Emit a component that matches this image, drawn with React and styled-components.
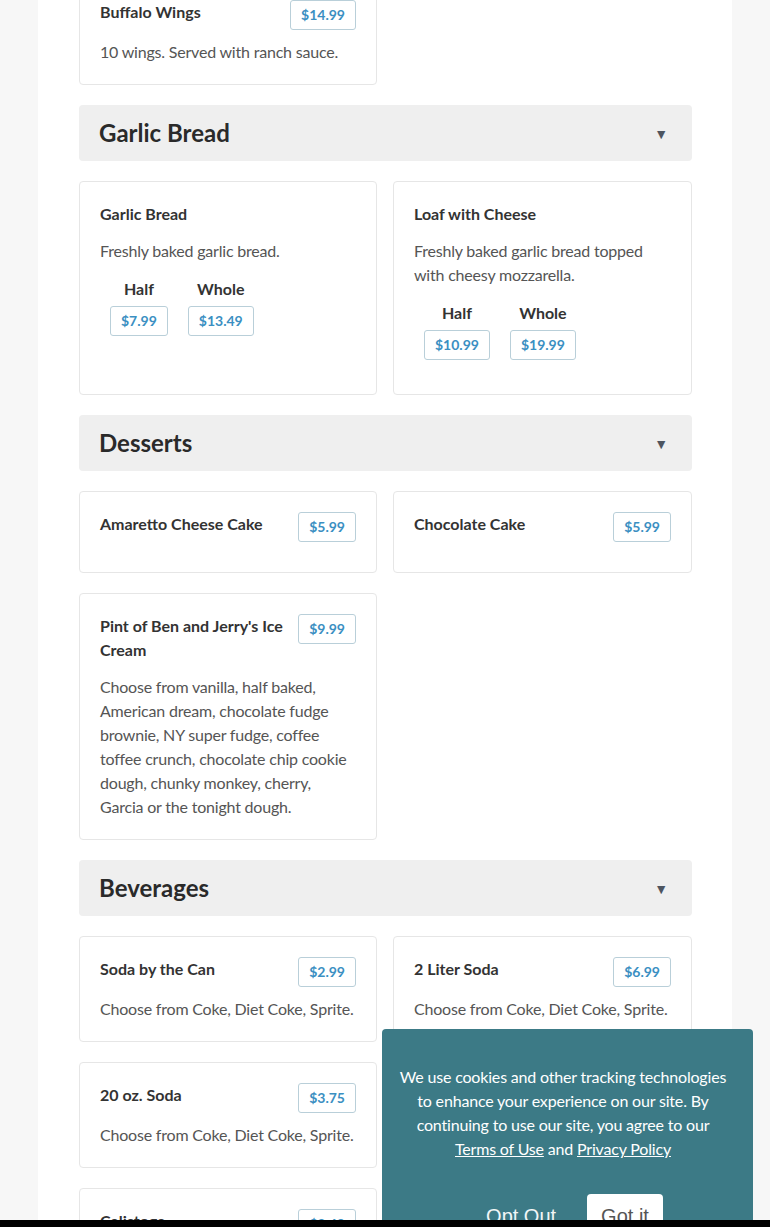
import React from 'react';
import styled, { createGlobalStyle } from 'styled-components';

const GlobalStyle = createGlobalStyle`
  html, body {
    margin: 0;
    padding: 0;
    background: #f7f7f7;
    font-family: Lato, "Open Sans", sans-serif;
    overflow: hidden;
  }
`;

const Page = styled.div`
  margin: 0 38px;
  background: #fff;
  min-height: 1227px;
  padding: 0 40px 0 41px;
  box-sizing: border-box;
`;

const Menu = styled.div`
  margin-top: -21px;
  display: flex;
  flex-direction: column;
  gap: 20px;
`;

const SectionHeader = styled.div`
  height: 56px;
  background: #efefef;
  border-radius: 4px;
  display: flex;
  align-items: center;
  justify-content: space-between;
  padding: 0 24px 0 20px;
`;

const SectionTitle = styled.h2`
  margin: 0 0 1px;
  font-size: 24px;
  font-weight: 700;
  color: #2a2a2a;
`;

const Arrow = styled.span`
  font-size: 14px;
  color: #4d5560;
`;

const Grid = styled.div`
  display: grid;
  grid-template-columns: 298px 299px;
  gap: 20px 16px;
`;

const Card = styled.div`
  border: 1px solid #e6e6e6;
  border-radius: 4px;
  padding: 20px;
  background: #fff;
`;

const TitleRow = styled.div`
  display: flex;
  align-items: flex-start;
  justify-content: space-between;
  gap: 12px;
`;

const ItemTitle = styled.h3`
  margin: 0 0 13px;
  font-size: 16px;
  line-height: 24px;
  font-weight: 700;
  color: #333;
`;

const Price = styled.span`
  flex-shrink: 0;
  display: inline-block;
  border: 1px solid #b9cfd9;
  border-radius: 3px;
  padding: 0 10px;
  height: 28px;
  line-height: 28px;
  font-size: 14px;
  font-weight: 700;
  color: #3b8fc2;
  margin-bottom: ${(p) => (p.$inline ? '0' : '10px')};
`;

const Desc = styled.p`
  margin: 0;
  font-size: 16px;
  line-height: 24px;
  letter-spacing: -0.2px;
  color: #555;
`;

const Options = styled.div`
  display: flex;
  margin-top: 14px;
  margin-bottom: 14px;
`;

const Option = styled.div`
  display: flex;
  flex-direction: column;
  align-items: center;
  margin: 0 10px;
  gap: 5px;
`;

const OptionLabel = styled.span`
  font-size: 16px;
  line-height: 24px;
  font-weight: 700;
  color: #333;
`;

const Banner = styled.div`
  position: fixed;
  top: 1029px;
  right: 17px;
  width: 371px;
  box-sizing: border-box;
  background: #3c7a86;
  border-radius: 4px;
  padding: 36px 18px 36px;
  text-align: center;
  color: #fff;
`;

const BannerText = styled.p`
  margin: 0 4px 0 -5px;
  font-size: 16px;
  line-height: 24px;
  letter-spacing: -0.18px;
`;

const BannerLink = styled.a`
  color: #fff;
  text-decoration: underline;
`;

const BannerActions = styled.div`
  display: flex;
  justify-content: center;
  gap: 17px;
  margin-top: 33px;
`;

const BannerButton = styled.button`
  font-family: "Liberation Sans", Arial, sans-serif;
  font-size: 20px;
  line-height: 24px;
  padding: 10px 14px;
  border: none;
  border-radius: 4px;
  background: ${(p) => (p.$solid ? '#fff' : 'transparent')};
  color: ${(p) => (p.$solid ? '#555' : '#f2f6f7')};
`;

const BottomBar = styled.div`
  position: fixed;
  left: 0;
  right: 0;
  bottom: 0;
  height: 7px;
  background: #000;
`;

const sections = [
  {
    items: [{ title: 'Buffalo Wings', price: '$14.99', desc: '10 wings. Served with ranch sauce.' }],
  },
  {
    name: 'Garlic Bread',
    items: [
      {
        title: 'Garlic Bread',
        desc: 'Freshly baked garlic bread.',
        options: [['Half', '$7.99'], ['Whole', '$13.49']],
      },
      {
        title: 'Loaf with Cheese',
        desc: 'Freshly baked garlic bread topped with cheesy mozzarella.',
        options: [['Half', '$10.99'], ['Whole', '$19.99']],
      },
    ],
  },
  {
    name: 'Desserts',
    items: [
      { title: 'Amaretto Cheese Cake', price: '$5.99' },
      { title: 'Chocolate Cake', price: '$5.99' },
      {
        title: "Pint of Ben and Jerry's Ice Cream",
        price: '$9.99',
        desc: 'Choose from vanilla, half baked, American dream, chocolate fudge brownie, NY super fudge, coffee toffee crunch, chocolate chip cookie dough, chunky monkey, cherry, Garcia or the tonight dough.',
      },
    ],
  },
  {
    name: 'Beverages',
    items: [
      { title: 'Soda by the Can', price: '$2.99', desc: 'Choose from Coke, Diet Coke, Sprite.' },
      { title: '2 Liter Soda', price: '$6.99', desc: 'Choose from Coke, Diet Coke, Sprite.' },
      { title: '20 oz. Soda', price: '$3.75', desc: 'Choose from Coke, Diet Coke, Sprite.' },
      { title: 'Bottled Water', price: '$1.99', desc: 'Spring water.' },
      { title: 'Calistoga', price: '$2.49', desc: 'Sparkling mineral water.' },
    ],
  },
];

const MenuCard = ({ item }) => (
  <Card>
    <TitleRow>
      <ItemTitle>{item.title}</ItemTitle>
      {item.price && <Price>{item.price}</Price>}
    </TitleRow>
    {item.desc && <Desc>{item.desc}</Desc>}
    {item.options && (
      <Options>
        {item.options.map(([label, price]) => (
          <Option key={label}>
            <OptionLabel>{label}</OptionLabel>
            <Price $inline>{price}</Price>
          </Option>
        ))}
      </Options>
    )}
  </Card>
);

const App = () => {
  return (
    <>
      <GlobalStyle />
      <Page>
        <Menu>
          {sections.map((section, i) => (
            <React.Fragment key={i}>
              {section.name && (
                <SectionHeader>
                  <SectionTitle>{section.name}</SectionTitle>
                  <Arrow>▼</Arrow>
                </SectionHeader>
              )}
              <Grid>
                {section.items.map((item) => (
                  <MenuCard key={item.title} item={item} />
                ))}
              </Grid>
            </React.Fragment>
          ))}
        </Menu>
      </Page>
      <Banner>
        <BannerText>
          We use cookies and other tracking technologies to enhance your experience on our site. By
          continuing to use our site, you agree to our <BannerLink href="#">Terms of Use</BannerLink> and{' '}
          <BannerLink href="#">Privacy Policy</BannerLink>
        </BannerText>
        <BannerActions>
          <BannerButton>Opt Out</BannerButton>
          <BannerButton $solid>Got it</BannerButton>
        </BannerActions>
      </Banner>
      <BottomBar />
    </>
  );
};

export default App;
